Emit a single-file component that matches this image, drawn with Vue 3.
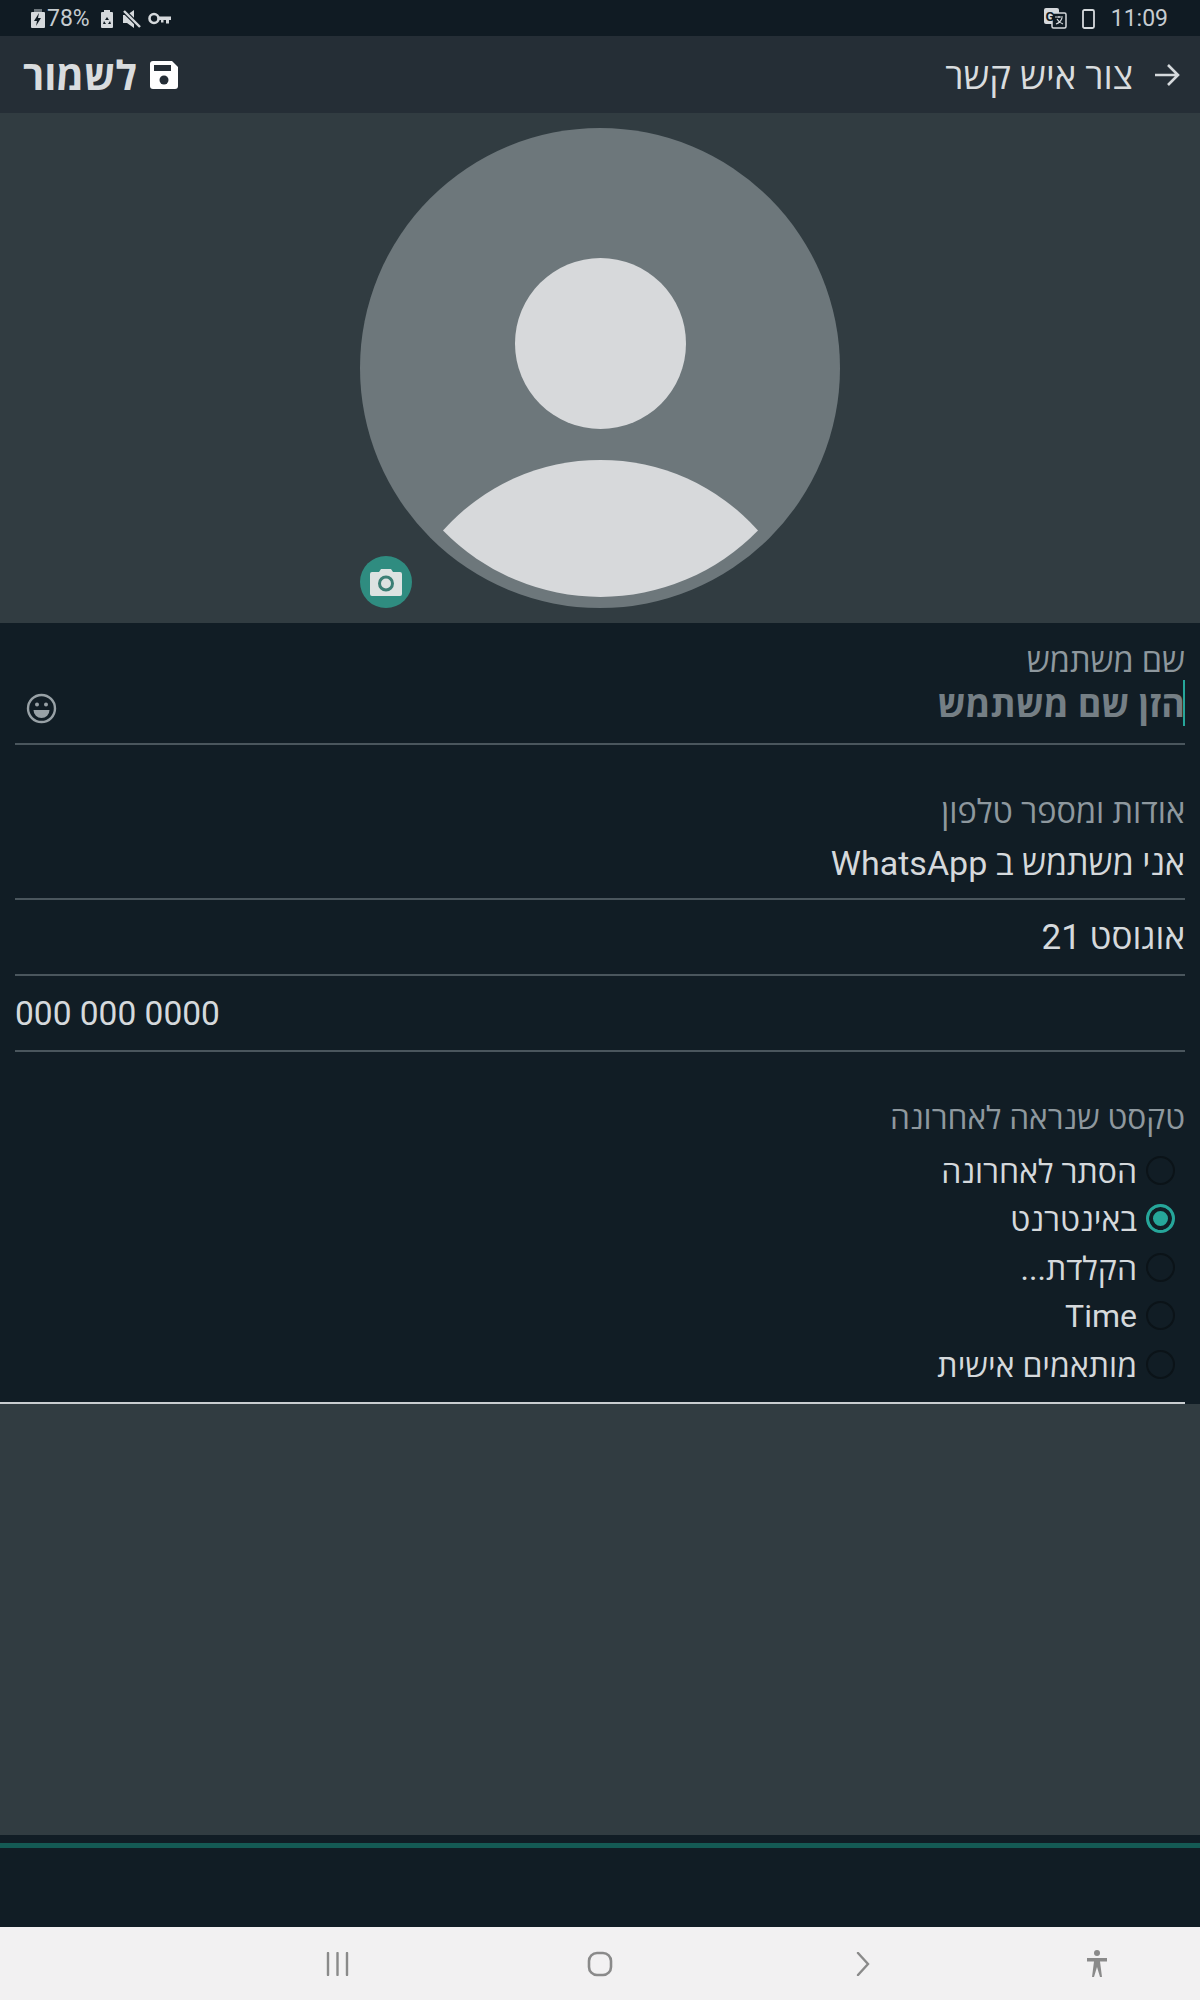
<template>
  <div class="screen">
    <div class="status-bar">
      <div class="status-group">
        <svg class="ic" width="16" height="20" viewBox="0 0 16 20">
          <rect x="4" y="0" width="8" height="3" fill="#6d767c" />
          <rect x="1" y="3" width="14" height="16" rx="1" fill="#d5d9dc" />
          <path d="M9 4 4 12h3l-1 5 5-8H8z" fill="#101b23" />
        </svg>
        <span class="status-text battery">78%</span>
        <svg class="ic icon-recycle" width="14" height="20" viewBox="0 0 14 20">
          <path d="M4 1h6v2h2a1 1 0 0 1 1 1v14a1 1 0 0 1-1 1H2a1 1 0 0 1-1-1V4a1 1 0 0 1 1-1h2z" fill="#d5d9dc" />
          <path d="M7 8l2 3H5zM4 12l2 3H3zM10 12l1 3H8z" fill="#101b23" />
        </svg>
        <svg class="ic icon-mute" width="18" height="18" viewBox="0 0 18 18">
          <path d="M0 5h4l7-5v18l-7-5H0z" fill="#d5d9dc" />
          <path d="M1 1l16 16" stroke="#101b23" stroke-width="4.500" />
          <path d="M1 1l16 16" stroke="#d5d9dc" stroke-width="2.400" />
        </svg>
        <svg class="ic icon-key" width="23" height="13" viewBox="0 0 23 13">
          <circle cx="6" cy="6.500" r="4.500" fill="none" stroke="#d5d9dc" stroke-width="2.600" />
          <path d="M10 4.500h13v3.500h-2v3.500h-3V8h-2.500v2.500H13V8h-3z" fill="#d5d9dc" />
        </svg>
      </div>
      <div class="status-group">
        <svg class="ic" width="23" height="21" viewBox="0 0 23 21">
          <rect x="0" y="0" width="15" height="16" rx="2" fill="#d5d9dc" />
          <rect x="8" y="5" width="14" height="15" rx="1.500" fill="#101b23" stroke="#d5d9dc" stroke-width="1.500" />
          <text x="1.500" y="13" class="g-letter">G</text>
          <path d="M11 9h8M15 8v2M12 16c3-1 5-3 6-6M13 11c1 2 3 4 6 5" stroke="#d5d9dc" stroke-width="1.200" fill="none" />
        </svg>
        <svg class="ic icon-phone" width="13" height="20" viewBox="0 0 13 20">
          <rect x="1" y="1" width="11" height="18" rx="1.500" fill="none" stroke="#d5d9dc" stroke-width="1.800" />
        </svg>
        <span class="status-text clock">11:09</span>
      </div>
    </div>

    <header class="top-bar">
      <div class="save-action">
        <span class="save-label" dir="rtl">לשמור</span>
        <svg width="28" height="28" viewBox="0 0 28 28">
          <path d="M3 0h19l6 6v19a3 3 0 0 1-3 3H3a3 3 0 0 1-3-3V3a3 3 0 0 1 3-3z" fill="#fff" />
          <rect x="4" y="4" width="17" height="6" fill="#252e36" />
          <circle cx="14" cy="19" r="4.500" fill="#252e36" />
        </svg>
      </div>
      <div class="title-wrap">
        <span class="title" dir="rtl">צור איש קשר</span>
        <svg width="26" height="26" viewBox="0 0 26 26">
          <path d="M1 13h23M14 3l10 10-10 10" fill="none" stroke="#d5d9dc" stroke-width="2.600" />
        </svg>
      </div>
    </header>

    <section class="avatar-panel">
      <div class="avatar-wrap">
        <svg width="480" height="480" viewBox="0 0 480 480">
          <circle cx="240" cy="240" r="240" fill="#6d777b" />
          <circle cx="240.500" cy="215.500" r="85.500" fill="#d7d9db" />
          <path d="M83 404A211 211 0 0 1 398 404A220 220 0 0 1 83 404z" transform="translate(0 -1.500)" fill="#d7d9db" />
        </svg>
        <button class="camera" type="button">
          <svg width="32" height="28" viewBox="0 0 32 28">
            <path d="M2 4h7l2-3h10l2 3h7a2 2 0 0 1 2 2v20a2 2 0 0 1-2 2H2a2 2 0 0 1-2-2V6a2 2 0 0 1 2-2z" fill="#dde2e1" />
            <circle cx="16" cy="15.500" r="6.500" fill="none" stroke="#3c7f75" stroke-width="3" />
          </svg>
        </button>
      </div>
    </section>

    <main class="form" dir="rtl">
      <div class="field field-name">
        <div class="label">שם משתמש</div>
        <div class="input-row">
          <span class="caret"></span>
          <span class="placeholder">הזן שם משתמש</span>
          <svg class="emoji" width="31" height="31" viewBox="0 0 31 31">
            <circle cx="15.500" cy="15.500" r="13.500" fill="none" stroke="#98a1a6" stroke-width="2.400" />
            <circle cx="11" cy="11.500" r="2" fill="#98a1a6" />
            <circle cx="20" cy="11.500" r="2" fill="#98a1a6" />
            <path d="M7.500 17h16a8 8 0 0 1-16 0z" fill="#98a1a6" />
          </svg>
        </div>
      </div>

      <div class="field field-about">
        <div class="label">אודות ומספר טלפון</div>
        <div class="value about-value">אני משתמש ב WhatsApp</div>
      </div>
      <div class="field field-line">
        <div class="value birth">אוגוסט 21</div>
      </div>
      <div class="field field-line">
        <div class="value phone" dir="ltr">000 000 0000</div>
      </div>

      <div class="field field-last">
        <div class="label label-last">טקסט שנראה לאחרונה</div>
        <div class="radio-list">
          <div v-for="option in options" :key="option.text" class="radio-row">
            <span class="radio" :class="{ checked: option.checked }"></span>
            <span class="radio-text">{{ option.text }}</span>
          </div>
        </div>
      </div>
    </main>

    <div class="empty-panel"></div>

    <div class="bottom-strip">
      <div class="teal-line"></div>
    </div>

    <nav class="nav-bar">
      <svg class="nav-recent" width="24" height="24" viewBox="0 0 24 24">
        <path d="M2 1v22M11.500 1v22M21 1v22" stroke="#8a8a8a" stroke-width="2.400" stroke-linecap="round" />
      </svg>
      <svg class="nav-home" width="26" height="26" viewBox="0 0 26 26">
        <rect x="2" y="2" width="22" height="22" rx="8" fill="none" stroke="#8a8a8a" stroke-width="2.600" />
      </svg>
      <svg class="nav-back" width="14" height="24" viewBox="0 0 14 24">
        <path d="M2 1l10 11L2 23" fill="none" stroke="#8a8a8a" stroke-width="2.400" stroke-linecap="round" />
      </svg>
      <svg class="nav-access" width="22" height="28" viewBox="0 0 22 28">
        <circle cx="11" cy="3" r="3" fill="#8a8a8a" />
        <path d="M1 8h20v3.500h-7L16 27h-2l-3-10-3 10H6l2-15.500H1z" fill="#8a8a8a" />
      </svg>
    </nav>
  </div>
</template>

<script setup>
const options = [
  { text: 'הסתר לאחרונה', checked: false },
  { text: 'באינטרנט', checked: true },
  { text: 'הקלדת...', checked: false },
  { text: 'Time', checked: false },
  { text: 'מותאמים אישית', checked: false },
]
</script>

<style>
html,
body {
  background: #111d25;
}
</style>

<style scoped>
.screen {
  width: 1200px;
  height: 2000px;
  display: flex;
  flex-direction: column;
  overflow: hidden;
  font-family: Roboto, "Open Sans", "Liberation Sans", sans-serif;
  background: #111d25;
}

.status-bar {
  height: 36px;
  flex: none;
  display: flex;
  align-items: center;
  justify-content: space-between;
  box-sizing: border-box;
  padding: 1px 32px 0 30px;
  background: #101b23;
}

.status-group {
  display: flex;
  align-items: center;
}

.ic {
  display: block;
  flex: none;
}

.status-text {
  font-size: 23px;
  color: #c6ccd0;
  line-height: 36px;
}

.battery {
  margin-left: 1px;
}

.icon-recycle {
  margin-left: 10px;
}

.icon-mute {
  margin-left: 9px;
}

.icon-key {
  margin-left: 7px;
}

.icon-phone {
  margin-left: 15px;
}

.clock {
  margin-left: 16px;
}

.g-letter {
  font-size: 13px;
  font-weight: 700;
  fill: #101b23;
}

.top-bar {
  height: 77px;
  flex: none;
  display: flex;
  align-items: center;
  justify-content: space-between;
  padding: 0 20px 0 23px;
  background: #252e36;
}

.save-action,
.title-wrap {
  display: flex;
  align-items: center;
}

.save-action {
  gap: 13px;
}

.title-wrap {
  gap: 21px;
}

.save-label {
  font-size: 40px;
  font-weight: 700;
  color: #d9dcde;
}

.title {
  font-size: 36.500px;
  color: #d9dcde;
}

.avatar-panel {
  height: 510px;
  flex: none;
  display: flex;
  justify-content: center;
  padding-top: 15px;
  box-sizing: border-box;
  background: #313c41;
}

.avatar-wrap {
  position: relative;
  width: 480px;
  height: 480px;
}

.avatar-wrap > svg {
  display: block;
}

.camera {
  position: absolute;
  left: 0;
  bottom: 0;
  width: 52px;
  height: 52px;
  padding: 0;
  border: 0;
  border-radius: 50%;
  display: flex;
  align-items: center;
  justify-content: center;
  background: #2f8c80;
}

.form {
  height: 781px;
  flex: none;
  padding: 0 15px;
  color: #d9dcde;
}

.field {
  box-sizing: border-box;
  border-bottom: 2px solid #4a565d;
}

.field-name {
  height: 122px;
  padding-top: 18px;
}

.field-about {
  height: 155px;
  padding-top: 47px;
}

.field-line {
  height: 76px;
  padding-top: 18px;
}

.field-last {
  height: 352px;
  margin: 0 0 0 -15px;
  padding: 47px 0 0 15px;
  border-bottom-color: #c9cdd0;
}

.label {
  font-size: 32.500px;
  line-height: 40px;
  color: #8e989e;
}

.label-last {
  font-size: 31.700px;
}

.value {
  font-size: 34px;
  line-height: 40px;
  color: #d5d9dc;
}

.about-value {
  margin-top: 11px;
}

.birth {
  font-size: 35px;
}

.phone {
  font-size: 33.500px;
  text-align: left;
}

.input-row {
  position: relative;
  display: flex;
  align-items: center;
  justify-content: space-between;
  height: 46px;
  margin-top: -1px;
}

.placeholder {
  font-size: 36px;
  font-weight: 700;
  color: #757f85;
}

.caret {
  position: absolute;
  right: 0;
  top: 0;
  width: 2px;
  height: 46px;
  background: #26a69a;
}

.emoji {
  display: block;
  margin: 10px 0 0 11px;
}

.radio-list {
  margin-top: 7px;
  padding-right: 10px;
}

.radio-row {
  height: 48.500px;
  display: flex;
  align-items: center;
  gap: 9px;
}

.radio {
  width: 29px;
  height: 29px;
  flex: none;
  box-sizing: border-box;
  border: 2.500px solid #0b1318;
  border-radius: 50%;
}

.radio.checked {
  border: 3px solid #26a69a;
  background: #26a69a;
  box-shadow: inset 0 0 0 4px #111d25;
}

.radio-text {
  font-size: 32px;
  color: #d5d9dc;
}

.empty-panel {
  height: 431px;
  flex: none;
  background: #313c41;
}

.bottom-strip {
  height: 92px;
  flex: none;
  padding-top: 8px;
  box-sizing: border-box;
  background: #111d25;
}

.teal-line {
  height: 5px;
  background: #145a54;
}

.nav-bar {
  flex: 1;
  display: flex;
  align-items: center;
  background: #f2f1f2;
}

.nav-recent {
  margin-left: 326px;
}

.nav-home {
  margin-left: 237px;
}

.nav-back {
  margin-left: 243px;
}

.nav-access {
  margin-left: 216px;
}
</style>
